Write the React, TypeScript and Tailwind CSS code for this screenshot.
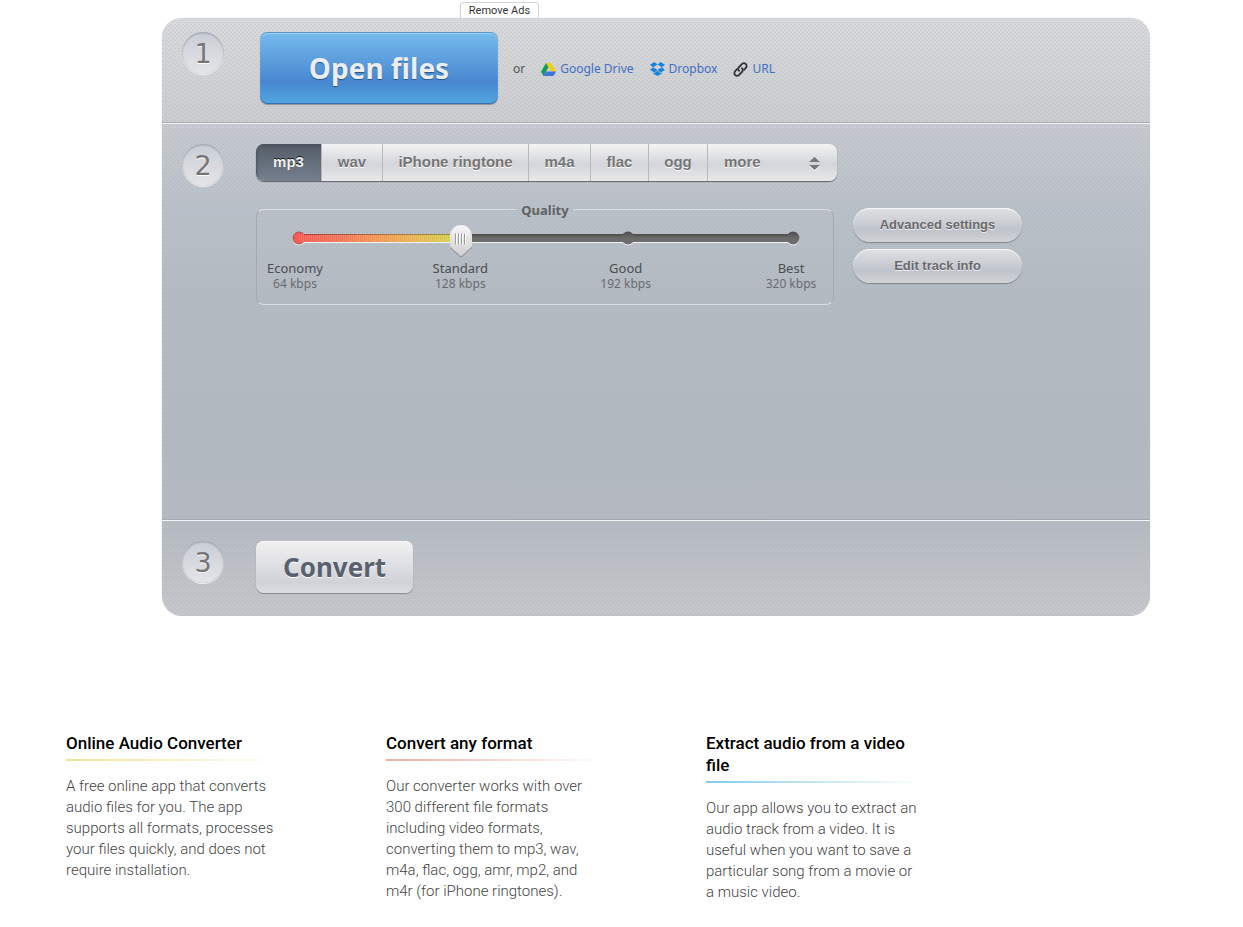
import { useState } from "react";
import type { ReactNode } from "react";

const formats = [
  { name: "mp3", width: "w-[66px]" },
  { name: "wav", width: "w-[61px]" },
  { name: "iPhone ringtone", width: "w-[146px]" },
  { name: "m4a", width: "w-[62px]" },
  { name: "flac", width: "w-[58px]" },
  { name: "ogg", width: "w-[59px]" },
];

const qualities = [
  { name: "Economy", rate: "64 kbps" },
  { name: "Standard", rate: "128 kbps" },
  { name: "Good", rate: "192 kbps" },
  { name: "Best", rate: "320 kbps" },
];

const features = [
  {
    title: "Online Audio Converter",
    rule: "from-[#f1e394]",
    text: "A free online app that converts audio files for you. The app supports all formats, processes your files quickly, and does not require installation.",
  },
  {
    title: "Convert any format",
    rule: "from-[#ecae9c]",
    text: "Our converter works with over 300 different file formats including video formats, converting them to mp3, wav, m4a, flac, ogg, amr, mp2, and m4r (for iPhone ringtones).",
  },
  {
    title: "Extract audio from a video file",
    rule: "from-[#82cbe9]",
    text: "Our app allows you to extract an audio track from a video. It is useful when you want to save a particular song from a movie or a music video.",
  },
];

function Step({ number }: { number: number }) {
  return (
    <div className="flex size-[42px] shrink-0 items-center justify-center rounded-full bg-linear-to-b from-[#c9cdd5] to-[#e4e5e7] pt-[3px] font-['DejaVu_Sans',sans-serif] text-[27px] text-[#757575] shadow-[inset_0_1px_2px_#999da5,0_1px_0_#eceded] [text-shadow:0_1px_0_#fff]">
      {number}
    </div>
  );
}

function DriveIcon() {
  return (
    <svg className="h-[13px] w-[15px]" viewBox="0 0 15 13" aria-hidden="true">
      <path d="M5 0h5l5 8.6h-5z" fill="#f5cc0c" />
      <path d="M5 0l2.5 4.3L2.5 13 0 8.7z" fill="#159a55" />
      <path d="M5 8.6h10L12.5 13h-10z" fill="#3d73dc" />
    </svg>
  );
}

function DropboxIcon() {
  return (
    <svg className="h-[14px] w-[15px]" viewBox="0 0 15 14" fill="#1683dc" aria-hidden="true">
      <path d="M4.4 0L7.5 2.6 3.1 5.3 0 2.8zM10.6 0L15 2.8l-3.1 2.5-4.4-2.7zM0 7.9l3.1-2.6L7.5 8 4.4 10.6zM11.9 5.3L15 7.9l-4.4 2.7L7.5 8zM7.5 8.7l3.1 2.6 1.3-.9v1L7.5 14l-4.4-2.6v-1l1.3.9z" />
    </svg>
  );
}

function ChainIcon() {
  return (
    <svg className="size-[15px]" viewBox="0 0 15 15" fill="none" stroke="#353535" strokeWidth="1.8" strokeLinecap="round" aria-hidden="true">
      <path d="M6.1 8.9C5 7.7 5 6.1 6.1 5l2.8-2.9c1.1-1.1 2.8-1.1 3.9-.1s1.1 2.7 0 3.9L11 7.8" />
      <path d="M8.9 6.1c1.1 1.2 1.1 2.8 0 3.9l-2.8 2.900c-1.100 1.100-2.800 1.100-3.900.1s-1.100-2.700 0-3.900L4 7.200" />
    </svg>
  );
}

function SourceLink({ icon, children }: { icon: ReactNode; children: ReactNode }) {
  return (
    <a href="#" className="flex items-center gap-1 text-[#3f6fc6]">
      {icon}
      {children}
    </a>
  );
}

function QualitySlider() {
  const [value, setValue] = useState(1);
  const left = (value / 3) * 100;
  return (
    <div className="relative mx-[42px] mt-[5px] h-[34px]">
      <svg className="absolute top-0 -left-[8px] h-[34px] w-[510px] overflow-visible" viewBox="0 0 510 34" aria-hidden="true">
        <defs>
          <linearGradient id="heat" gradientUnits="userSpaceOnUse" x1="8" x2="173" y1="0" y2="0">
            <stop offset="0" stopColor="#f75a52" />
            <stop offset="0.25" stopColor="#f47355" />
            <stop offset="0.6" stopColor="#efa650" />
            <stop offset="1" stopColor="#cdd750" />
          </linearGradient>
          <linearGradient id="shade" x1="0" x2="0" y1="0" y2="1">
            <stop offset="0" stopColor="#4c4c4c" />
            <stop offset="0.5" stopColor="#6a6a6a" />
            <stop offset="1" stopColor="#6f6f6f" />
          </linearGradient>
          <pattern id="ribs" width="2" height="8" patternUnits="userSpaceOnUse">
            <rect width="1" height="8" fill="#fff" opacity="0.12" />
          </pattern>
        </defs>
        <g fill="#f1f2f2">
          <rect x="8" y="11" width="494" height="8" />
          <circle cx="8" cy="15" r="6.5" />
          <circle cx="337" cy="15" r="6.5" />
          <circle cx="502" cy="15" r="6.5" />
        </g>
        <rect x="8" y="10" width="494" height="8" fill="url(#shade)" />
        <circle cx="337" cy="14" r="6.5" fill="url(#shade)" />
        <circle cx="502" cy="14" r="6.5" fill="url(#shade)" />
        <circle cx="8" cy="14" r="6" fill="#f75a52" stroke="#a4504d" />
        <rect x="8" y="10" width={(494 * left) / 100} height="8" fill="url(#heat)" />
        <rect x="8" y="10" width={(494 * left) / 100} height="8" fill="url(#ribs)" />
        <rect x="13" y="10" width={Math.max((494 * left) / 100 - 5, 0)} height="1" fill="#000" opacity="0.3" />
      </svg>
      <svg
        className="absolute top-0 h-[36px] w-[26px] overflow-visible"
        style={{ left: `calc(${left}% - 15px)` }}
        viewBox="0 0 26 36"
        aria-hidden="true"
      >
        <defs>
          <linearGradient id="knob" x1="0" x2="0" y1="0" y2="1">
            <stop offset="0" stopColor="#f6f6f6" />
            <stop offset="1" stopColor="#cfcfcf" />
          </linearGradient>
        </defs>
        <path d="M2 13a11 11 0 0 1 22 0v11L13 34 2 24z" fill="#555" opacity="0.35" />
        <path d="M2 12a11 11 0 0 1 22 0v10.5L13 32.5 2 22.5z" fill="url(#knob)" />
        <path d="M7.5 9.5v11M10.5 9.5v11M13.5 9.5v11M16.5 9.5v11" stroke="#9c9c9c" />
        <path d="M8.5 9.5v11M11.5 9.5v11M14.5 9.5v11M17.5 9.5v11" stroke="#fff" />
      </svg>
      <input
        type="range"
        aria-label="Quality"
        min={0}
        max={3}
        step={1}
        value={value}
        onChange={(e) => setValue(Number(e.target.value))}
        className="absolute inset-x-0 top-0 h-[34px] w-full cursor-pointer opacity-0"
      />
    </div>
  );
}

function PillButton({ children }: { children: ReactNode }) {
  return (
    <button
      type="button"
      className="h-[34px] w-[169px] rounded-full bg-linear-to-b from-[#e0e1e3] via-[#bfc3cb] via-65% to-[#d1d3d6] font-['Liberation_Sans',sans-serif] text-[13px] font-bold text-[#68696c] shadow-[inset_0_1px_0_#f6f6f6,0_1px_1px_#7f8287] [text-shadow:0_1px_0_#f0f0f0]"
    >
      {children}
    </button>
  );
}

export default function App() {
  const [format, setFormat] = useState("mp3");
  return (
    <div className="min-h-screen bg-white font-['Noto_Sans',sans-serif] text-[#555]">
      <div className="flex h-[18px] items-end pl-[460px]">
        <a
          href="#"
          className="flex h-4 w-[79px] items-center justify-center rounded-t border border-b-0 border-[#d4d4d4] pt-0.5 font-['Roboto',sans-serif] text-[11px] text-[#333]"
        >
          Remove Ads
        </a>
      </div>

      <main className="mr-[93px] ml-[162px] rounded-[20px] bg-[conic-gradient(at_2px_1px,#8f949c2e_25%,transparent_0),conic-gradient(at_2px_1px,#8f949c2e_25%,transparent_0),linear-gradient(#d9dadb_0,#cbcdd0_104px,#c7cad0_106px,#bbc1c9_190px,#b5bcc3_270px,#b3bac1_420px,#b6bbc3_502px,#c5c8cb_100%)] bg-[size:4px_4px,4px_4px,100%_100%] bg-[position:0_0,2px_2px,0_0] shadow-[0_1px_0_#bfc1c4,0_0_1px_#a9abae]">
        <section className="flex h-[106px] items-start border-b border-[#f4f4f5] pt-[14px] pl-5 shadow-[inset_0_-1px_0_#a7a9ae]">
          <Step number={1} />
          <button
            type="button"
            className="ml-9 h-[72px] w-[238px] rounded-lg bg-linear-to-b from-[#76bbed] via-[#4887d0] via-70% to-[#52a7e0] text-[28px] font-bold text-[#ebedf0] shadow-[inset_0_1px_0_#5795c8,inset_0_2px_1px_#a1d3f5,inset_0_-1px_0_#356fae,0_1px_1px_#8a919a] [text-shadow:0_1px_1px_#27568b]"
          >
            Open files
          </button>
          <div className="flex h-[74px] items-center gap-4 pl-[15px] text-xs">
            <span>or</span>
            <SourceLink icon={<DriveIcon />}>Google Drive</SourceLink>
            <SourceLink icon={<DropboxIcon />}>Dropbox</SourceLink>
            <SourceLink icon={<ChainIcon />}>URL</SourceLink>
          </div>
        </section>

        <section className="flex min-h-[397px] items-start border-b border-[#f4f4f5] pt-5 pl-5 shadow-[inset_0_-1px_0_#a4a7ab]">
          <Step number={2} />
          <div className="ml-8">
            <div className="flex h-[37px] w-[581px] overflow-hidden rounded-lg bg-linear-to-b from-[#f3f3f3] via-[#d3d5da] via-55% to-[#e9e9ea] font-['Liberation_Sans',sans-serif] text-[15px] font-bold text-[#757575] shadow-[0_1px_1px_#606267]">
              {formats.map(({ name, width }) => (
                <button
                  key={name}
                  type="button"
                  aria-pressed={format === name}
                  onClick={() => setFormat(name)}
                  className={`${width} border-r border-[#b6b8bc] whitespace-nowrap ${
                    format === name
                      ? "bg-linear-to-b from-[#545c67] to-[#75808f] text-[#f0f1f3] shadow-[inset_1px_2px_3px_#4a515b] [text-shadow:0_-1px_0_#111]"
                      : "[text-shadow:0_1px_0_#fff]"
                  }`}
                >
                  {name}
                </button>
              ))}
              <label className="relative flex grow items-center">
                <select
                  aria-label="More formats"
                  className="size-full appearance-none bg-transparent pl-4 [text-shadow:0_1px_0_#fff]"
                >
                  <option>more</option>
                  <option>mp2</option>
                  <option>amr</option>
                </select>
                <svg className="pointer-events-none absolute top-3 right-[17px] h-[15px] w-[11px]" viewBox="0 0 11 15" aria-hidden="true">
                  <path d="M0 6l5.5-5L11 6z" fill="#777" />
                  <path d="M0 10h11l-5.5 5z" fill="#fff" />
                  <path d="M0 9h11l-5.5 5z" fill="#777" />
                </svg>
              </label>
            </div>

            <fieldset className="mt-[18px] h-[106px] w-[578px] rounded-lg border border-x-[#a5a9b0] border-y-[#dcdfe2]">
              <legend className="mx-auto px-[5px] pt-0.5 text-[13px] leading-[18px] font-bold text-[#606266]">Quality</legend>
              <QualitySlider />
              <div className="mt-0.5 -mr-[13px] -ml-[17px] flex justify-between">
                {qualities.map(({ name, rate }) => (
                  <div key={name} className="w-[110px] text-center">
                    <div className="text-[13px] leading-4 text-[#4c4e51]">{name}</div>
                    <div className="text-[12px] leading-4 text-[#686b6f]">{rate}</div>
                  </div>
                ))}
              </div>
            </fieldset>
          </div>
          <div className="mt-16 ml-4 flex flex-col gap-[7px]">
            <PillButton>Advanced settings</PillButton>
            <PillButton>Edit track info</PillButton>
          </div>
        </section>

        <section className="flex h-[94px] items-start pt-5 pl-5">
          <Step number={3} />
          <button
            type="button"
            className="ml-8 h-[52px] w-[157px] rounded-lg bg-linear-to-b from-[#f1f1f1] via-[#d0d2d8] via-80% to-[#dcdddf] text-[26px] font-bold text-[#59616d] shadow-[inset_0_1px_0_#fafafa,0_1px_1px_#85888d] [text-shadow:0_1px_0_#fff]"
          >
            Convert
          </button>
        </section>
      </main>

      <div className="flex gap-[104px] px-[66px] pt-[117px] font-['Roboto',sans-serif]">
        {features.map(({ title, rule, text }) => (
          <article key={title} className="w-[216px]">
            <h2 className="text-[17px] leading-[22px] font-medium text-black">{title}</h2>
            <div className={`mt-[5px] h-0.5 bg-linear-to-r ${rule} to-transparent`} />
            <p className="mt-[15px] text-[15px] leading-[21px] font-light text-[#444]">{text}</p>
          </article>
        ))}
      </div>
    </div>
  );
}
